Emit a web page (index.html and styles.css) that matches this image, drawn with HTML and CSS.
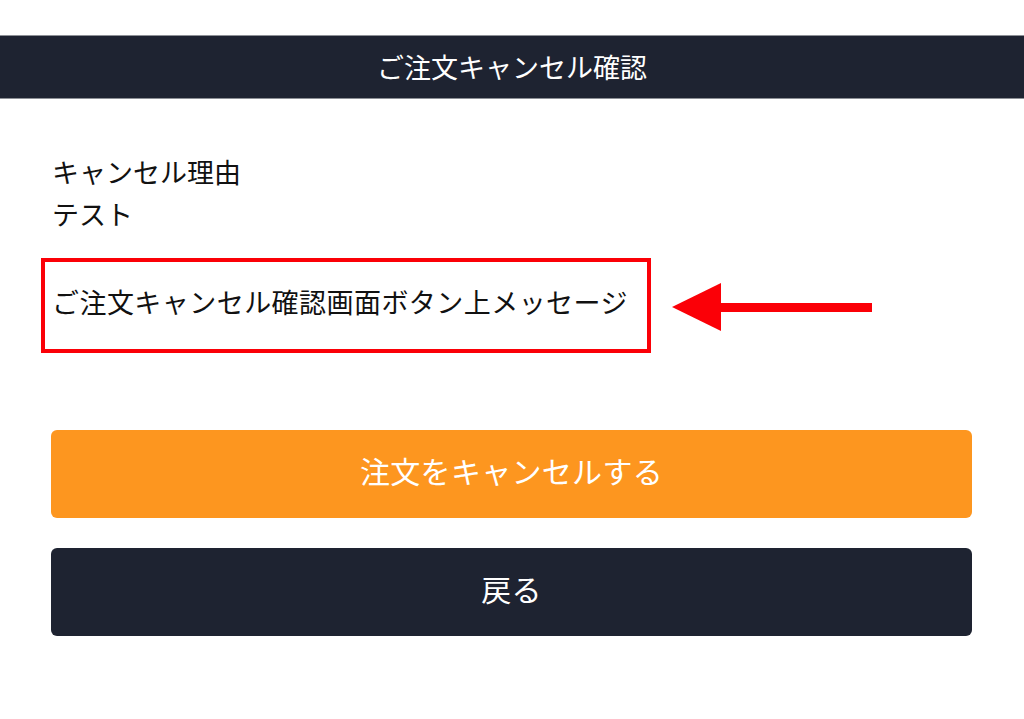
FILE: index.html
```html
<!DOCTYPE html>
<html lang="ja">
<head>
    <meta charset="UTF-8">
    <meta name="viewport" content="width=device-width, initial-scale=1.0">
    <title>ご注文キャンセル確認</title>
    <link rel="stylesheet" href="styles.css">
</head>
<body>
    <header class="title-bar">ご注文キャンセル確認</header>

    <main class="content">
        <div class="reason">
            <p>キャンセル理由</p>
            <p>テスト</p>
        </div>

        <div class="message-row">
            <div class="message-box">ご注文キャンセル確認画面ボタン上メッセージ</div>
            <svg class="arrow" width="202" height="50" viewBox="0 0 202 50">
                <polygon points="0,26 49,2 49,50" fill="#fb0007"/>
                <rect x="48" y="22" width="152" height="9" fill="#fb0007"/>
            </svg>
        </div>

        <div class="actions">
            <button class="btn btn-cancel">注文をキャンセルする</button>
            <button class="btn btn-back">戻る</button>
        </div>
    </main>
</body>
</html>
```

FILE: styles.css
```css
body {
    margin: 0;
    background-color: #fff;
    color: #111;
    font-family: "Noto Sans CJK JP", "Noto Sans", sans-serif;
}
.title-bar {
    margin-top: 35px;
    height: 62px;
    line-height: 62px;
    background-color: #1e2331;
    border-top: 1px solid #8d9096;
    border-bottom: 1px solid #8d9096;
    color: #fff;
    font-size: 27px;
    text-align: center;
}
.content {
    padding: 0 52px 0 51px;
}
.reason {
    margin-top: 52px;
    font-size: 27px;
    line-height: 42px;
}
.reason p {
    margin: 0;
    padding-left: 1px;
}
.message-row {
    display: flex;
    align-items: center;
    gap: 21px;
    margin-top: 23px;
    margin-left: -10px;
}
.message-box {
    box-sizing: border-box;
    width: 610px;
    height: 95px;
    display: flex;
    align-items: center;
    padding: 0 7px 9px;
    border: 4px solid #fb0007;
    font-size: 27px;
    letter-spacing: 0.45px;
}
.actions {
    display: flex;
    flex-direction: column;
    gap: 30px;
    margin-top: 77px;
}
.btn {
    height: 88px;
    padding: 0 0 8px;
    border: none;
    border-radius: 6px;
    color: #fff;
    font-family: inherit;
    font-size: 30px;
    letter-spacing: 0.3px;
    cursor: pointer;
}
.btn-cancel {
    background-color: #fd961f;
}
.btn-back {
    background-color: #1e2331;
}
```
